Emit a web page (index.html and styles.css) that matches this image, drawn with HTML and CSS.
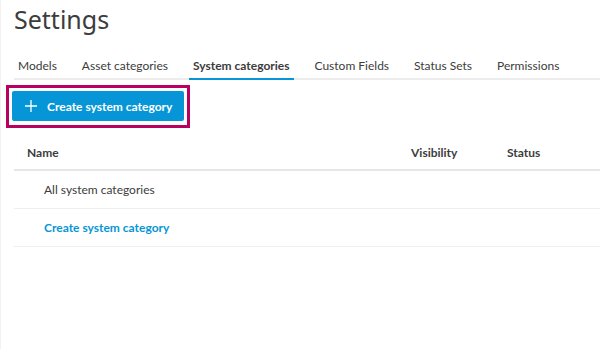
FILE: index.html
```html
<!DOCTYPE html>
<html lang="en">
<head>
    <meta charset="UTF-8">
    <meta name="viewport" content="width=device-width, initial-scale=1.0">
    <title>Settings</title>
    <link rel="stylesheet" href="styles.css">
</head>
<body>
    <div class="page">
        <h1 class="title">Settings</h1>

        <div class="tabs">
            <a href="#" class="tab">Models</a>
            <a href="#" class="tab">Asset categories</a>
            <a href="#" class="tab active">System categories</a>
            <a href="#" class="tab">Custom Fields</a>
            <a href="#" class="tab">Status Sets</a>
            <a href="#" class="tab">Permissions</a>
        </div>

        <div class="highlight">
            <button class="create-btn">
                <svg width="12" height="12" viewBox="0 0 12 12">
                    <path d="M6 0v12M0 6h12" stroke="#fff" stroke-width="1.3" fill="none"/>
                </svg>
                Create system category
            </button>
        </div>

        <div class="table">
            <div class="row head">
                <div class="cell">Name</div>
                <div class="cell">Visibility</div>
                <div class="cell">Status</div>
            </div>
            <div class="row">
                <div class="cell indent">All system categories</div>
                <div class="cell"></div>
                <div class="cell"></div>
            </div>
            <div class="row">
                <div class="cell indent link">Create system category</div>
                <div class="cell"></div>
                <div class="cell"></div>
            </div>
        </div>
    </div>
</body>
</html>
```

FILE: styles.css
```css
body {
    margin: 0;
    font-family: Lato, "Noto Sans", sans-serif;
    color: #3c3c3c;
    background: white;
}
.page {
    padding-left: 13px;
    min-height: 349px;
    box-sizing: border-box;
    border-left: 1px solid #f2f2f2;
}
.title {
    margin: 0;
    padding: 2px 0 0 0;
    font-family: "Noto Sans", sans-serif;
    font-size: 25px;
    font-weight: normal;
    line-height: 34px;
    color: #3c3c3c;
}
.tabs {
    display: flex;
    gap: 17px;
    margin-top: 21px;
    border-bottom: 2px solid #ececec;
}
.tab {
    flex-shrink: 0;
    white-space: nowrap;
    padding: 0 4px 4px;
    font-size: 12px;
    line-height: 17px;
    color: #3c3c3c;
    text-decoration: none;
    border-bottom: 2px solid transparent;
    margin-bottom: -2px;
}
.tab.active {
    font-weight: bold;
    border-bottom-color: #0696d7;
}
.highlight {
    display: inline-block;
    margin: 5px 0 0 -8px;
    padding: 3px 3px 4px;
    border: 3px solid #b8005f;
}
.create-btn {
    display: flex;
    align-items: center;
    gap: 10px;
    height: 30px;
    padding: 0 12px 0 13px;
    border: none;
    border-radius: 2px;
    background: #0696d7;
    color: white;
    font-family: inherit;
    font-size: 12px;
    font-weight: bold;
    white-space: nowrap;
}
.row {
    display: grid;
    grid-template-columns: 384px 96px 1fr;
    box-sizing: border-box;
    height: 38px;
    align-items: center;
    border-bottom: 1px solid #eeeeee;
    font-size: 12px;
}
.row.head {
    height: 43px;
    border-bottom: 2px solid #e6e6e6;
    font-weight: bold;
    padding-top: 7px;
}
.cell {
    padding-left: 13px;
}
.cell.indent {
    padding-left: 30px;
}
.link {
    color: #0696d7;
    font-weight: bold;
}
```
